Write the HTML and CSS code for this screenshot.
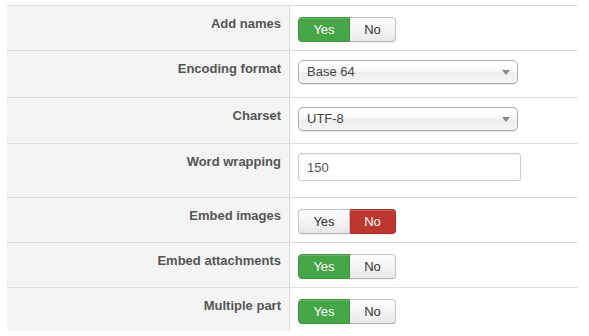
FILE: index.html
```html
<!DOCTYPE html>
<html>
    <head>
        <title>Mail options</title>
        <meta charset="utf-8">
        <link rel="stylesheet" href="styles.css">
    </head>
    <body>
        <table class="opts">
            <tr>
                <td class="lbl">Add names</td>
                <td class="ctl">
                    <div class="btn_group">
                        <span class="btn yes on">Yes</span><span class="btn no">No</span>
                    </div>
                </td>
            </tr>
            <tr>
                <td class="lbl">Encoding format</td>
                <td class="ctl">
                    <div class="chzn">Base 64<b class="caret"></b></div>
                </td>
            </tr>
            <tr class="short">
                <td class="lbl">Charset</td>
                <td class="ctl">
                    <div class="chzn">UTF-8<b class="caret"></b></div>
                </td>
            </tr>
            <tr>
                <td class="lbl">Word wrapping</td>
                <td class="ctl">
                    <input type="text" class="txt" value="150">
                </td>
            </tr>
            <tr>
                <td class="lbl">Embed images</td>
                <td class="ctl">
                    <div class="btn_group">
                        <span class="btn yes">Yes</span><span class="btn no off">No</span>
                    </div>
                </td>
            </tr>
            <tr>
                <td class="lbl">Embed attachments</td>
                <td class="ctl">
                    <div class="btn_group">
                        <span class="btn yes on">Yes</span><span class="btn no">No</span>
                    </div>
                </td>
            </tr>
            <tr class="last">
                <td class="lbl">Multiple part</td>
                <td class="ctl">
                    <div class="btn_group">
                        <span class="btn yes on">Yes</span><span class="btn no">No</span>
                    </div>
                </td>
            </tr>
        </table>
    </body>
</html>
```

FILE: styles.css
```css
body {
    margin: 0;
    padding: 5px 11px 0 7px;
    background-color: #fff;
    font-family: "Liberation Sans", Arial, sans-serif;
    font-size: 13px;
}
.opts {
    width: 571px;
    border-collapse: collapse;
    table-layout: fixed;
}
.opts td {
    border-top: 1px solid #ddd;
    padding: 9px 8px 8px 8px;
    vertical-align: top;
    line-height: 18px;
}
.lbl {
    width: 266px;
    text-align: right;
    font-weight: bold;
    color: #555;
    background-color: #f4f4f4;
    border-right: 1px solid #ddd;
}
.ctl {
    background-color: #fff;
}
.btn_group {
    display: flex;
    margin-top: 2px;
}
.btn {
    box-sizing: border-box;
    height: 25px;
    line-height: 23px;
    text-align: center;
    color: #333;
    border: 1px solid #c5c5c5;
    border-bottom-color: #b3b3b3;
    background: linear-gradient(#fff, #e8e8e8);
    box-shadow: inset 0 1px 0 rgba(255,255,255,.2), 0 1px 2px rgba(0,0,0,.05);
}
.yes {
    width: 52px;
    border-radius: 4px 0 0 4px;
}
.no {
    width: 46px;
    border-left: none;
    border-radius: 0 4px 4px 0;
}
.on {
    color: #fff;
    background: #46a546;
    border-color: #3e953e;
}
.off {
    color: #fff;
    background: #bd362f;
    border-color: #a9302a;
}
.chzn {
    position: relative;
    box-sizing: border-box;
    width: 220px;
    height: 24px;
    line-height: 22px;
    margin-bottom: 5px;
    padding-left: 8px;
    color: #444;
    border: 1px solid #aaa;
    border-radius: 5px;
    background: linear-gradient(#fff 20%, #f6f6f6 50%, #eee 52%, #f4f4f4);
    box-shadow: 0 0 3px #fff inset, 0 1px 1px rgba(0,0,0,.1);
}
.caret {
    position: absolute;
    right: 7px;
    top: 9px;
    width: 0;
    height: 0;
    border-left: 4px solid transparent;
    border-right: 4px solid transparent;
    border-top: 5px solid #888;
}
.short td {
    padding-bottom: 7px;
}
.txt {
    display: block;
    box-sizing: border-box;
    width: 223px;
    height: 28px;
    margin: 0 0 8px 0;
    padding: 4px 8px;
    font-family: "Liberation Sans", Arial, sans-serif;
    font-size: 13px;
    color: #555;
    border: 1px solid #ccc;
    border-radius: 3px;
    box-shadow: inset 0 1px 1px rgba(0,0,0,.075);
}
.last td {
    padding-bottom: 7px;
}
```
